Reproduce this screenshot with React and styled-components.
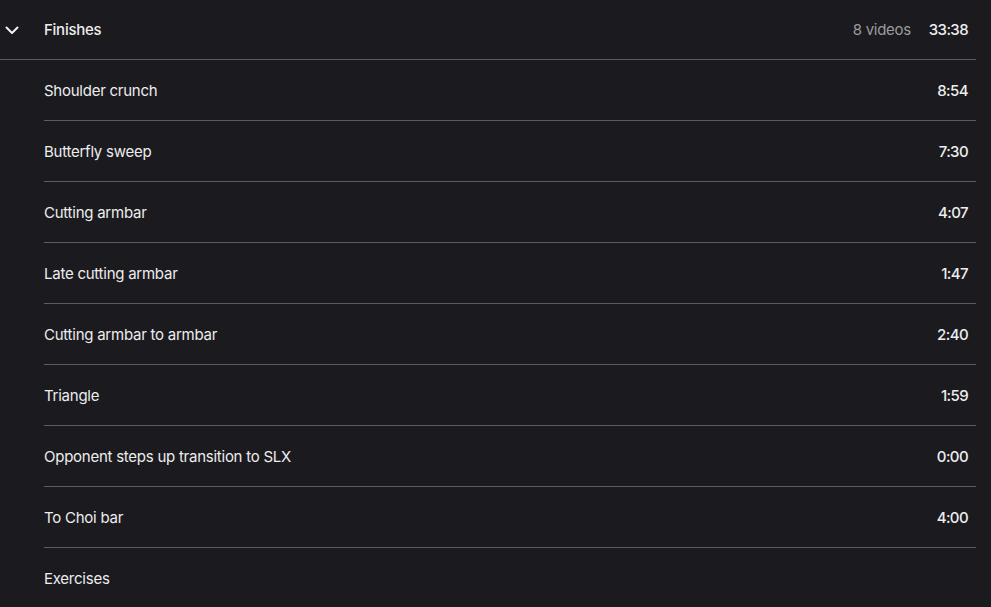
import React from "react";
import styled, { createGlobalStyle } from "styled-components";

const GlobalStyle = createGlobalStyle`
  html, body {
    margin: 0;
    padding: 0;
    background: #1b1a1f;
  }
  body {
    font-family: Inter, "Noto Sans", sans-serif;
    color: #ededed;
  }
`;

const Section = styled.div`
  padding-right: 15px;
  height: 607px;
  overflow: hidden;
`;

const Header = styled.div`
  height: 59px;
  display: flex;
  align-items: center;
  border-bottom: 1px solid #5d5c61;
  padding-right: 8px;
`;

const Chevron = styled.div`
  width: 44px;
  display: flex;
  align-items: center;
  padding-left: 5px;
  box-sizing: border-box;
`;

const Title = styled.span`
  flex: 1;
  font-size: 15px;
  letter-spacing: -0.25px;
  font-weight: 500;
`;

const Meta = styled.div`
  display: flex;
  align-items: center;
  gap: 18px;
  font-size: 15px;
  letter-spacing: -0.3px;
`;

const Count = styled.span`
  color: #9b9a9e;
`;

const Row = styled.div`
  margin-left: 44px;
  height: 60px;
  display: flex;
  align-items: center;
  justify-content: space-between;
  padding-right: 8px;
  border-bottom: ${(p) => (p.last ? "none" : "1px solid #5d5c61")};
  font-size: 15px;
  letter-spacing: -0.25px;
`;

const Duration = styled.span`
  font-weight: 500;
  letter-spacing: -0.6px;
`;

const videos = [
  ["Shoulder crunch", "8:54"],
  ["Butterfly sweep", "7:30"],
  ["Cutting armbar", "4:07"],
  ["Late cutting armbar", "1:47"],
  ["Cutting armbar to armbar", "2:40"],
  ["Triangle", "1:59"],
  ["Opponent steps up transition to SLX", "0:00"],
  ["To Choi bar", "4:00"],
];

export default function App() {
  return (
    <>
      <GlobalStyle />
      <Section>
        <Header>
          <Chevron>
            <svg width="14" height="14" viewBox="0 0 14 14" fill="none">
              <path d="M1.5 4.5 L7 10 L12.5 4.5" stroke="#f2f2f2" strokeWidth="2" strokeLinecap="round" strokeLinejoin="round" />
            </svg>
          </Chevron>
          <Title>Finishes</Title>
          <Meta>
            <Count>8 videos</Count>
            <Duration>33:38</Duration>
          </Meta>
        </Header>
        {videos.map(([name, time]) => (
          <Row key={name}>
            <span>{name}</span>
            <Duration>{time}</Duration>
          </Row>
        ))}
        <Row last>
          <span>Exercises</span>
        </Row>
      </Section>
    </>
  );
}
